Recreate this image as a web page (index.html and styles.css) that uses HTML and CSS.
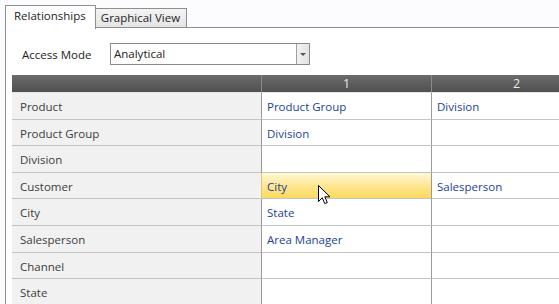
FILE: index.html
```html
<!DOCTYPE html>
<html>
<head>
  <meta charset="UTF-8">
  <title>Relationships</title>
  <link rel="stylesheet" href="styles.css">
</head>
<body>
  <div class="tabs">
    <div class="tab selected">Relationships</div>
    <div class="tab">Graphical View</div>
    <div class="tab-rest"></div>
  </div>

  <div class="panel">
    <div class="access">
      <label>Access Mode</label>
      <div class="combo">
        <span class="combo-text">Analytical</span>
        <span class="combo-btn"><span class="arrow"></span></span>
      </div>
    </div>

    <div class="grid">
      <div class="hd first"></div>
      <div class="hd">1</div>
      <div class="hd">2</div>

      <div class="name">Product</div>
      <div class="cell">Product Group</div>
      <div class="cell">Division</div>

      <div class="name">Product Group</div>
      <div class="cell">Division</div>
      <div class="cell"></div>

      <div class="name">Division</div>
      <div class="cell"></div>
      <div class="cell"></div>

      <div class="name">Customer</div>
      <div class="cell hover">City</div>
      <div class="cell">Salesperson</div>

      <div class="name">City</div>
      <div class="cell">State</div>
      <div class="cell"></div>

      <div class="name">Salesperson</div>
      <div class="cell">Area Manager</div>
      <div class="cell"></div>

      <div class="name">Channel</div>
      <div class="cell"></div>
      <div class="cell"></div>

      <div class="name">State</div>
      <div class="cell"></div>
      <div class="cell"></div>
    </div>
  </div>

  <svg class="cursor" width="13" height="20" viewBox="0 0 13 20">
    <path d="M0.5 0.5 L0.5 16.5 L4.3 12.8 L6.8 18.6 L9.3 17.5 L6.8 11.8 L12 11.8 Z" fill="#fff" stroke="#000" stroke-width="1" stroke-linejoin="round"/>
  </svg>
</body>
</html>
```

FILE: styles.css
```css
body {
  margin: 0;
  background: #fcfcfe;
  font-family: "Open Sans", "Noto Sans", sans-serif;
  font-size: 11.5px;
  color: #333;
  overflow: hidden;
  height: 304px;
}
.tabs {
  display: flex;
  align-items: flex-end;
  padding-left: 5px;
  padding-top: 6px;
  height: 22px;
}
.tab {
  box-sizing: border-box;
  height: 20px;
  padding: 0 6px 0 5px;
  line-height: 18px;
  color: #1e1e1e;
  background: linear-gradient(#f4f4f4, #e4e4e6);
  border: 1px solid #8e8e8e;
  border-left: none;
  border-bottom: 1px solid #8e8e8e;
}
.tab.selected {
  height: 24px;
  padding: 0 9px 0 8px;
  line-height: 20px;
  background: #fff;
  border-left: 1px solid #8e8e8e;
  border-bottom: none;
  margin-bottom: -1px;
  position: relative;
}
.tab-rest {
  flex: 1;
  border-bottom: 1px solid #8e8e8e;
}
.panel {
  margin-left: 5px;
  border-left: 1px solid #8e8e8e;
  background: #fff;
  height: 280px;
}
.access {
  display: flex;
  align-items: center;
  padding: 15px 0 0 16px;
  height: 22px;
}
.access label {
  width: 88px;
  color: #222;
}
.combo {
  box-sizing: border-box;
  display: flex;
  width: 200px;
  height: 22px;
  border: 1px solid #8a8a8a;
  background: #fff;
}
.combo-text {
  flex: 1;
  padding-left: 3px;
  line-height: 19px;
  color: #222;
}
.combo-btn {
  box-sizing: border-box;
  width: 13px;
  border-left: 1px solid #a0a0a0;
  background: linear-gradient(90deg, #f2f2f4, #e2e2e6);
  display: flex;
  align-items: center;
  justify-content: center;
}
.arrow {
  width: 0;
  height: 0;
  border-left: 3px solid transparent;
  border-right: 3px solid transparent;
  border-top: 3px solid #555;
}
.grid {
  display: grid;
  grid-template-columns: 249px 170px 170px;
  grid-template-rows: 18px repeat(8, 26.6px);
  margin: 10px 0 0 6px;
}
.hd {
  background: linear-gradient(#6b6b6b, #505050);
  color: #ececec;
  font-size: 12.5px;
  text-align: center;
  line-height: 18px;
  border-left: 1px solid #8a8a8a;
  border-bottom: 1px solid #e6e6e6;
}
.hd.first {
  border-left: none;
}
.name, .cell {
  box-sizing: border-box;
  border-bottom: 1px solid #c4c4c4;
  padding-top: 3px;
  line-height: 22px;
  white-space: nowrap;
}
.name {
  background: #f1f1f1;
  padding-left: 8px;
  color: #3c3c3c;
}
.cell {
  background: #fff;
  border-left: 1px solid #9a9a9a;
  padding-left: 5px;
  color: #1b3f99;
}
.cell.hover {
  background: linear-gradient(#fff8d8, #ffe89a 45%, #fbd85c);
  border-left-color: #e8c66a;
}
.cursor {
  position: absolute;
  left: 318px;
  top: 185px;
}
```
